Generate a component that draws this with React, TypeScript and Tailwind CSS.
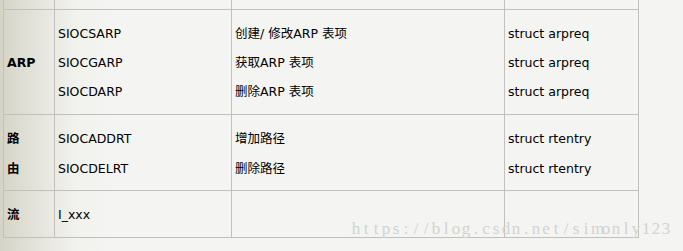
import React from "react";

const font = { fontFamily: '"DejaVu Sans", "Noto Sans CJK SC", sans-serif' };

function Cell({
  w,
  pt,
  lh,
  lines,
  bold,
}: {
  w: string;
  pt: string;
  lh: string;
  lines: string[];
  bold?: boolean;
}) {
  return (
    <div className={`${w} ${pt} shrink-0 box-border border-r border-[#c0c0c0] pl-[3px] ${bold ? "font-bold" : ""}`}>
      {lines.map((l, i) => (
        <div key={i} className={`${lh} whitespace-pre`}>
          {l}
        </div>
      ))}
    </div>
  );
}

export default function App() {
  const rows: {
    h: string;
    pt: string;
    lh: string;
    cols: { lines: string[]; bold?: boolean; pt?: string }[];
  }[] = [
    {
      h: "h-[10px]",
      pt: "pt-0",
      lh: "leading-[10px]",
      cols: [{ lines: [] }, { lines: [] }, { lines: [] }, { lines: [] }],
    },
    {
      h: "h-[105px]",
      pt: "pt-[9px]",
      lh: "leading-[29.2px]",
      cols: [
        { lines: ["ARP"], bold: true, pt: "pt-[38px]" },
        { lines: ["SIOCSARP", "SIOCGARP", "SIOCDARP"] },
        { lines: ["创建/ 修改ARP 表项", "获取ARP 表项", "删除ARP 表项"] },
        { lines: ["struct arpreq", "struct arpreq", "struct arpreq"] },
      ],
    },
    {
      h: "h-[76px]",
      pt: "pt-[9px]",
      lh: "leading-[29.9px]",
      cols: [
        { lines: ["路", "由"], bold: true },
        { lines: ["SIOCADDRT", "SIOCDELRT"] },
        { lines: ["增加路径", "删除路径"] },
        { lines: ["struct rtentry", "struct rtentry"] },
      ],
    },
    {
      h: "h-[47px]",
      pt: "pt-[9px]",
      lh: "leading-[30px]",
      cols: [
        { lines: ["流"], bold: true },
        { lines: ["I_xxx"] },
        { lines: [] },
        { lines: [] },
      ],
    },
  ];
  const widths = ["w-[51px]", "w-[177px]", "w-[273px]", "w-[134px]"];
  const mark = "https://blog.csdn.net/simonly123";

  return (
    <div
      className="relative w-[683px] h-[251px] overflow-hidden bg-[linear-gradient(to_right,#d5d4c7_0px,#e6e5dd_40px,#f1f1ed_75px,#f4f4f2_110px)] text-[12.5px] text-black"
      style={font}
    >
      <div className="ml-[3px] w-[636px] border-l border-[#c0c0c0] flex flex-col">
        {rows.map((r, ri) => (
          <div key={ri} className={`flex ${r.h} box-border border-b border-[#c0c0c0]`}>
            {r.cols.map((c, ci) => (
              <Cell
                key={ci}
                w={widths[ci]}
                pt={c.pt ?? r.pt}
                lh={r.lh}
                lines={c.lines}
                bold={c.bold}
              />
            ))}
          </div>
        ))}
      </div>
      <div
        className="absolute left-[351px] top-[219px] flex text-[17px] leading-[20px] text-[#d3d3cf] whitespace-pre"
        style={{ fontFamily: '"Liberation Serif", serif' }}
      >
        {mark.split("").map((ch, i) => (
          <span key={i} className="inline-block w-[10px] text-center">
            {ch}
          </span>
        ))}
      </div>
    </div>
  );
}
